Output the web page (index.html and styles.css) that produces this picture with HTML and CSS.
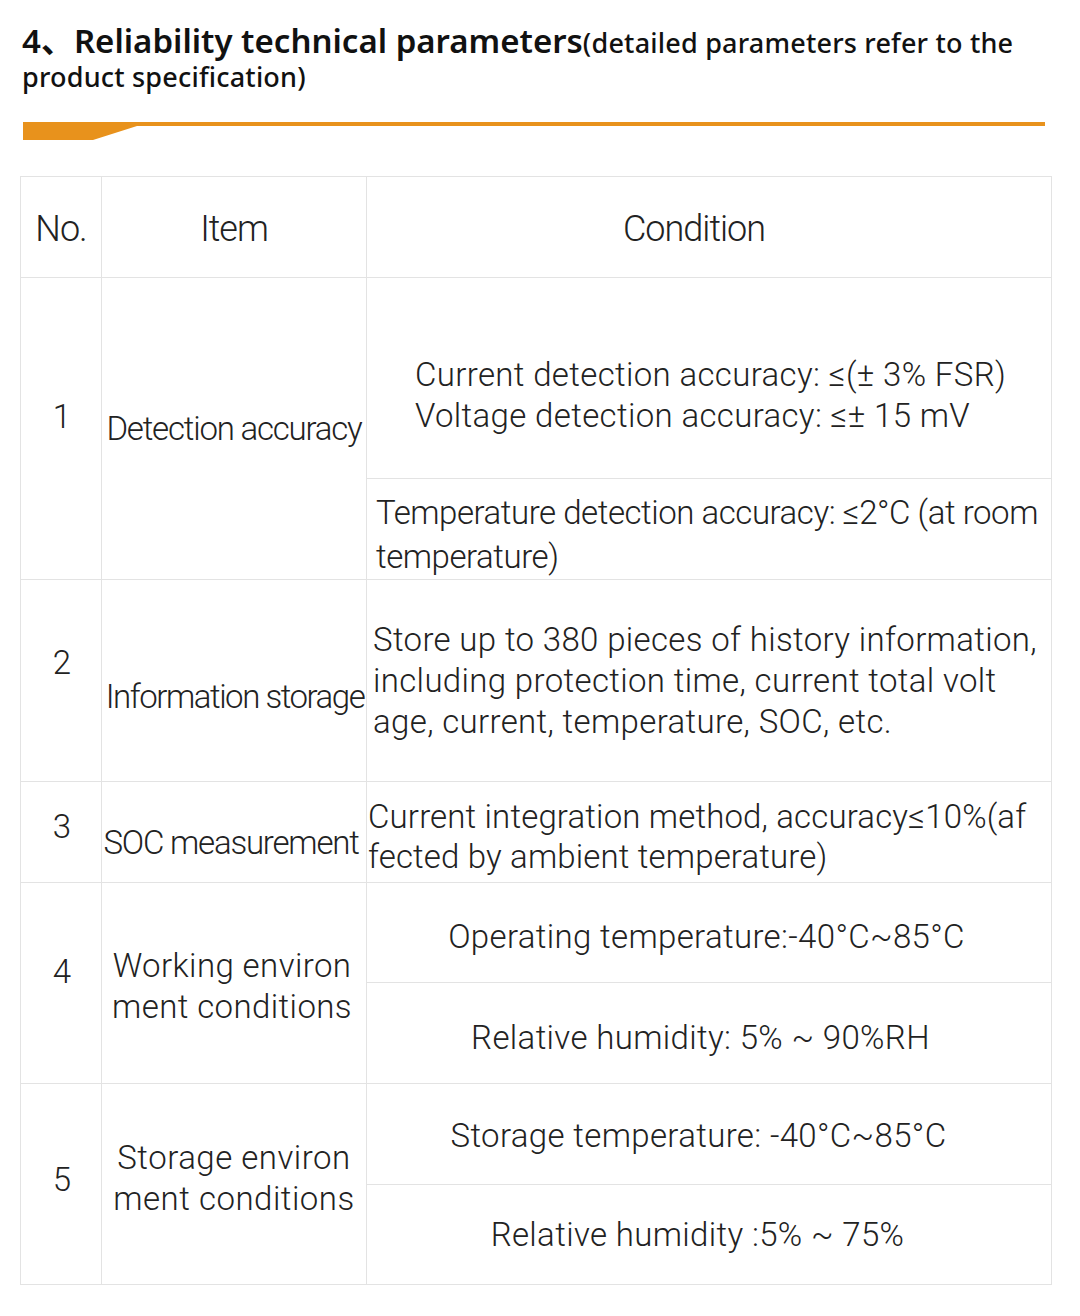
FILE: index.html
```html
<!DOCTYPE html>
<html lang="en">
<head>
<meta charset="utf-8">
<title>Reliability technical parameters</title>
<link rel="stylesheet" href="styles.css">
</head>
<body>
<div class="page">
  <h1 class="title"><span class="title-main">4、Reliability technical parameters</span><span class="title-sub">(detailed parameters refer to the<br>product specification)</span></h1>

  <div class="rule">
    <svg width="1060" height="24" viewBox="0 0 1060 24" aria-hidden="true">
      <polygon points="23,2 1045,2 1045,6 137,6 93,20 23,20" fill="#E8921C"/>
    </svg>
  </div>

  <div class="table">
    <div class="cell head">No.</div>
    <div class="cell head">Item</div>
    <div class="cell head head-cond">Condition</div>

    <div class="cell num span2 n1">1</div>
    <div class="cell item span2">Detection accuracy</div>
    <div class="cell cond left c1a">Current detection accuracy: ≤(± 3% FSR)<br>Voltage detection accuracy: ≤± 15 mV</div>
    <div class="cell cond left c1b">Temperature detection accuracy: ≤2°C (at room<br>temperature)</div>

    <div class="cell num n2">2</div>
    <div class="cell item i2">Information storage</div>
    <div class="cell cond left c2">Store up to 380 pieces of history information,<br>including protection time, current total volt<br>age, current, temperature, SOC, etc.</div>

    <div class="cell num n3">3</div>
    <div class="cell item i3">SOC measurement</div>
    <div class="cell cond left c3">Current integration method, accuracy≤10%(af<br>fected by ambient temperature)</div>

    <div class="cell num span2 n4">4</div>
    <div class="cell item span2 i4">Working environ<br>ment conditions</div>
    <div class="cell cond c4a">Operating temperature:-40°C~85°C</div>
    <div class="cell cond c4b">Relative humidity: 5% ~ 90%RH</div>

    <div class="cell num span2 n5">5</div>
    <div class="cell item span2 i5">Storage environ<br>ment conditions</div>
    <div class="cell cond c5a">Storage temperature: -40°C~85°C</div>
    <div class="cell cond c5b">Relative humidity :5% ~ 75%</div>
  </div>
</div>
</body>
</html>
```

FILE: styles.css
```css
html, body {
  margin: 0;
  padding: 0;
  background: #ffffff;
}

.page {
  width: 1080px;
  min-height: 1316px;
  font-family: Roboto, "Noto Sans", "Noto Sans CJK SC", sans-serif;
  color: #222222;
}

.title {
  margin: 0;
  padding: 25px 0 0 22px;
  font-family: "Noto Sans", Roboto, "Noto Sans CJK SC", sans-serif;
  font-weight: 600;
  line-height: 32px;
  color: #111111;
}

.title-main {
  font-size: 33px;
}

.title-sub {
  font-size: 27px;
  font-weight: 500;
  letter-spacing: 0.2px;
}

.rule {
  margin-top: 27px;
  height: 24px;
}

.rule svg {
  display: block;
}

.table {
  margin: 32px 0 0 20px;
  display: grid;
  grid-template-columns: 80px 264px 684px;
  grid-template-rows: 100px 200px 100px 201px 100px 99px 100px 100px 99px;
  gap: 1px;
  padding: 1px;
  width: max-content;
  background: #e3e3e3;
}

.cell {
  background: #ffffff;
  display: flex;
  flex-direction: column;
  align-items: center;
  justify-content: center;
  text-align: center;
  font-size: 33px;
  font-weight: 300;
  letter-spacing: 0;
  line-height: 41px;
  white-space: nowrap;
  box-sizing: border-box;
}

.span2 {
  grid-row: span 2;
}

.head {
  font-size: 36px;
  letter-spacing: -1px;
  padding-top: 4px;
}

.head-cond {
  padding-right: 30px;
}

.item {
  letter-spacing: -1.2px;
}

.cond {
  letter-spacing: 0.35px;
}

.left {
  align-items: flex-start;
  text-align: left;
}

.num { padding-left: 2px; }
.n1 { padding-bottom: 24px; }
.n2 { padding-bottom: 36px; }
.n3 { padding-bottom: 12px; }
.n4 { padding-bottom: 24px; }
.n5 { padding-bottom: 10px; }

.i2 { padding-top: 32px; padding-left: 2px; letter-spacing: -1.45px; }
.i3 { padding-top: 20px; padding-right: 6px; }
.i4 { padding-top: 6px; padding-right: 4px; letter-spacing: 0.4px; }
.i5 { padding-bottom: 12px; letter-spacing: 0.5px; }

.c1a { padding: 33px 0 0 48px; }
.c1b { padding: 12px 0 0 9px; line-height: 44px; letter-spacing: -0.45px; }
.c2 { padding-left: 6px; }
.c3 { padding: 9px 0 0 1px; line-height: 40px; letter-spacing: 0.15px; }

.c4a { padding: 8px 5px 0 0; }
.c4b { padding: 9px 17px 0 0; }
.c5a { padding: 3px 21px 0 0; }
.c5b { padding: 0 23px 0 0; }
```
